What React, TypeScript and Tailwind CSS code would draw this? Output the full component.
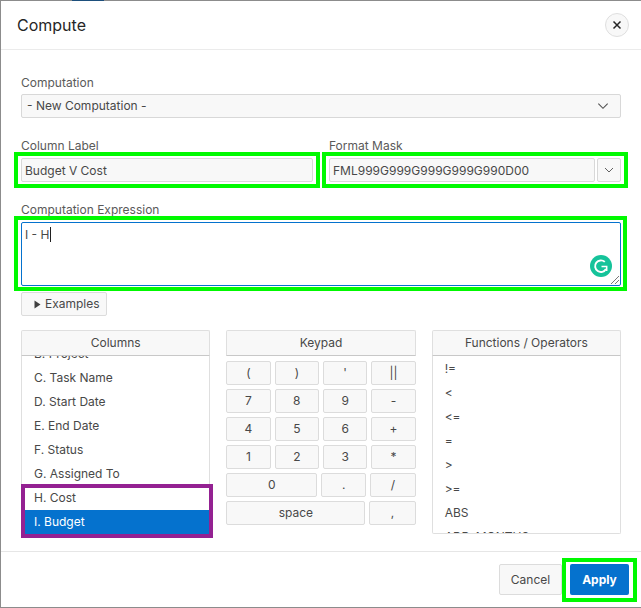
import type { ReactNode } from "react";

const columns = ["B. Project", "C. Task Name", "D. Start Date", "E. End Date", "F. Status", "G. Assigned To", "H. Cost"];
const functions = ["!=", "<", "<=", "=", ">", ">=", "ABS", "ADD_MONTHS"];
const keypadRows = [
    ["(", ")", "'", "||"],
    ["7", "8", "9", "-"],
    ["4", "5", "6", "+"],
    ["1", "2", "3", "*"],
];

const keyClass =
    "flex h-6 items-center justify-center rounded-[2px] border border-[#dcdcdc] bg-[#f8f8f8] text-[12px] text-[#484848]";

const Chevron = ({ size = 12 }: { size?: number }) => (
    <svg width={size} height={size} viewBox="0 0 12 12" fill="none" stroke="#505050" strokeWidth="0.9">
        <path d="M2 4l4 4 4-4" />
    </svg>
);

const Field = ({ label, children, className = "" }: { label: string; children: ReactNode; className?: string }) => (
    <div className={className}>
        <div className="mb-[4px] pt-px h-[17px] text-[12px] leading-4 text-[#5a5a5a]">{label}</div>
        {children}
    </div>
);

const PanelHeader = ({ title }: { title: string }) => (
    <div className="flex h-[26px] shrink-0 items-center justify-center rounded-t-[2px] border border-[#dfdfdf] border-b-[#c8c8c8] bg-[#f8f8f8] text-[12px] text-[#484848]">
        {title}
    </div>
);

const App = () => {
    return (
        <div className="relative h-[608px] w-[641px] overflow-hidden bg-[#8c8c8c] py-px pl-px font-['Inter',sans-serif]">
            <div className="absolute left-[72px] top-0 h-px w-[32px] bg-[#1d4f7c]" />
            <div className="flex h-[606px] flex-col bg-white">
                <div className="flex h-[49px] shrink-0 items-center justify-between border-b border-[#ebebeb] pl-4 pr-[12px]">
                    <div className="text-[16px] text-[#262626]">Compute</div>
                    <div className="flex h-6 w-6 items-center justify-center rounded-full border border-[#dfdfdf] bg-[#f8f8f8]">
                        <svg width="10" height="10" viewBox="0 0 10 10" fill="none" stroke="#262626" strokeWidth="1.5">
                            <path d="M1.5 1.5l7 7M8.5 1.5l-7 7" />
                        </svg>
                    </div>
                </div>

                <div className="min-h-0 flex-1 px-5 pt-6">
                    <div className="mb-[3px] h-[17px] pt-px text-[12px] leading-4 text-[#5a5a5a]">Computation</div>
                    <div className="flex h-6 items-center justify-between rounded-[2px] border border-[#d8d8d8] bg-[#f8f8f8] pl-[5px] pr-[10px] text-[12px] text-[#484848]">
                        <span>- New Computation -</span>
                        <Chevron size={14} />
                    </div>

                    <div className="mt-[19px] flex">
                        <Field label="Column Label" className="w-[292px]">
                            <div className="relative">
                                <div className="flex h-6 items-center rounded-[2px] border border-[#d8d8d8] bg-[#f8f8f8] pl-[3px] pt-[2px] text-[12px] text-[#484848]">
                                    Budget V Cost
                                </div>
                                <div className="absolute -bottom-[6px] -left-[7px] -right-[7px] -top-[6px] border-4 border-[#00f900]" />
                            </div>
                        </Field>
                        <Field label="Format Mask" className="ml-4 w-[292px]">
                            <div className="relative flex gap-[2px]">
                                <div className="flex h-6 flex-1 items-center rounded-[2px] border border-[#d8d8d8] bg-[#f8f8f8] pl-[3px] pt-[2px] text-[12px] text-[#484848]">
                                    FML999G999G999G999G990D00
                                </div>
                                <div className="flex h-6 w-6 items-center justify-center rounded-[2px] border border-[#d8d8d8] bg-[#f8f8f8]">
                                    <Chevron />
                                </div>
                                <div className="absolute -bottom-[6px] -left-[7px] -right-[7px] -top-[6px] border-4 border-[#00f900]" />
                            </div>
                        </Field>
                    </div>

                    <Field label="Computation Expression" className="mt-[19px]">
                        <div className="relative">
                            <div className="flex h-16 items-start rounded-[2px] border border-[#0572ce] bg-white pl-[3px] pt-[4px] text-[12px] leading-4 text-[#484848]">
                                I - H
                                <span className="ml-px h-[15px] w-px bg-[#202020]" />
                            </div>
                            <svg className="absolute bottom-[2px] right-[2px]" width="8" height="8" viewBox="0 0 8 8" stroke="#555" strokeWidth="0.8">
                                <path d="M0 8l8-8M4 8l4-4" />
                            </svg>
                            <svg className="absolute bottom-[9px] right-[9px]" width="22" height="22" viewBox="0 0 22 22" fill="none">
                                <circle cx="11" cy="11" r="11" fill="#15c39a" />
                                <path d="M14.8 6.9A5.8 5.8 0 1 0 16 14" stroke="#fff" strokeWidth="1.9" />
                                <path d="M11.5 11.6h5.2v4.4" stroke="#fff" strokeWidth="1.5" />
                            </svg>
                            <div className="absolute -bottom-[5px] -left-[7px] -right-[6px] -top-[6px] border-4 border-[#00f900]" />
                        </div>
                    </Field>

                    <div className="mt-[6px] flex h-6 w-[86px] items-center gap-1 rounded-[2px] border border-[#dcdcdc] bg-[#f8f8f8] pl-[12px] text-[12px] text-[#484848]">
                        <svg width="7" height="9" viewBox="0 0 7 9" fill="#404040">
                            <path d="M0.5 0.5l6 4-6 4z" />
                        </svg>
                        Examples
                    </div>

                    <div className="mt-[14px] grid h-[204px] grid-cols-3 grid-rows-[204px] gap-4">
                        <div className="relative flex min-h-0 flex-col">
                            <PanelHeader title="Columns" />
                            <div className="min-h-0 flex-1 overflow-hidden border-x border-[#dfdfdf]">
                                <div className="-mt-[14px] text-[12px] text-[#484848]">
                                    {columns.map((name) => (
                                        <div key={name} className="flex h-6 items-center pl-[12px]">
                                            {name}
                                        </div>
                                    ))}
                                    <div className="flex h-6 items-center bg-[#0572ce] pl-[12px] text-white">I. Budget</div>
                                </div>
                            </div>
                            <div className="absolute -bottom-[4px] -right-[3px] left-0 h-[54px] border-4 border-[#942192]" />
                        </div>

                        <div className="flex min-h-0 flex-col">
                            <PanelHeader title="Keypad" />
                            <div className="mt-[5px] flex flex-col gap-1">
                                {keypadRows.map((row) => (
                                    <div key={row[0]} className="grid grid-cols-4 gap-1">
                                        {row.map((key) => (
                                            <div key={key} className={keyClass}>
                                                {key}
                                            </div>
                                        ))}
                                    </div>
                                ))}
                                <div className="flex gap-1">
                                    <div className={`${keyClass} w-[91px]`}>0</div>
                                    <div className={`${keyClass} w-[45px]`}>.</div>
                                    <div className={`${keyClass} flex-1`}>/</div>
                                </div>
                                <div className="flex gap-1">
                                    <div className={`${keyClass} w-[139px]`}>space</div>
                                    <div className={`${keyClass} flex-1`}>,</div>
                                </div>
                            </div>
                        </div>

                        <div className="flex min-h-0 flex-col">
                            <PanelHeader title="Functions / Operators" />
                            <div className="min-h-0 flex-1 overflow-hidden rounded-b-[2px] border-x border-b border-[#dfdfdf] pt-px text-[12px] text-[#484848]">
                                {functions.map((name) => (
                                    <div key={name} className="flex h-6 shrink-0 items-center pl-[12px]">
                                        {name}
                                    </div>
                                ))}
                            </div>
                        </div>
                    </div>
                </div>

                <div className="flex h-[56px] shrink-0 items-start justify-end gap-2 border-t border-[#e6e6e6] pr-[12px] pt-[12px] text-[12px]">
                    <div className="flex h-[31px] w-[63px] items-center justify-center rounded-[2px] border border-[#dcdcdc] bg-[#f8f8f8] text-[#484848]">
                        Cancel
                    </div>
                    <div className="relative flex h-[31px] w-[59px] items-center justify-center rounded-[2px] bg-[#0572ce] font-bold text-white">
                        Apply
                        <div className="absolute -bottom-[7px] -left-[8px] -right-[8px] -top-[6px] border-4 border-[#00f900]" />
                    </div>
                </div>
            </div>
        </div>
    );
};

export default App;
